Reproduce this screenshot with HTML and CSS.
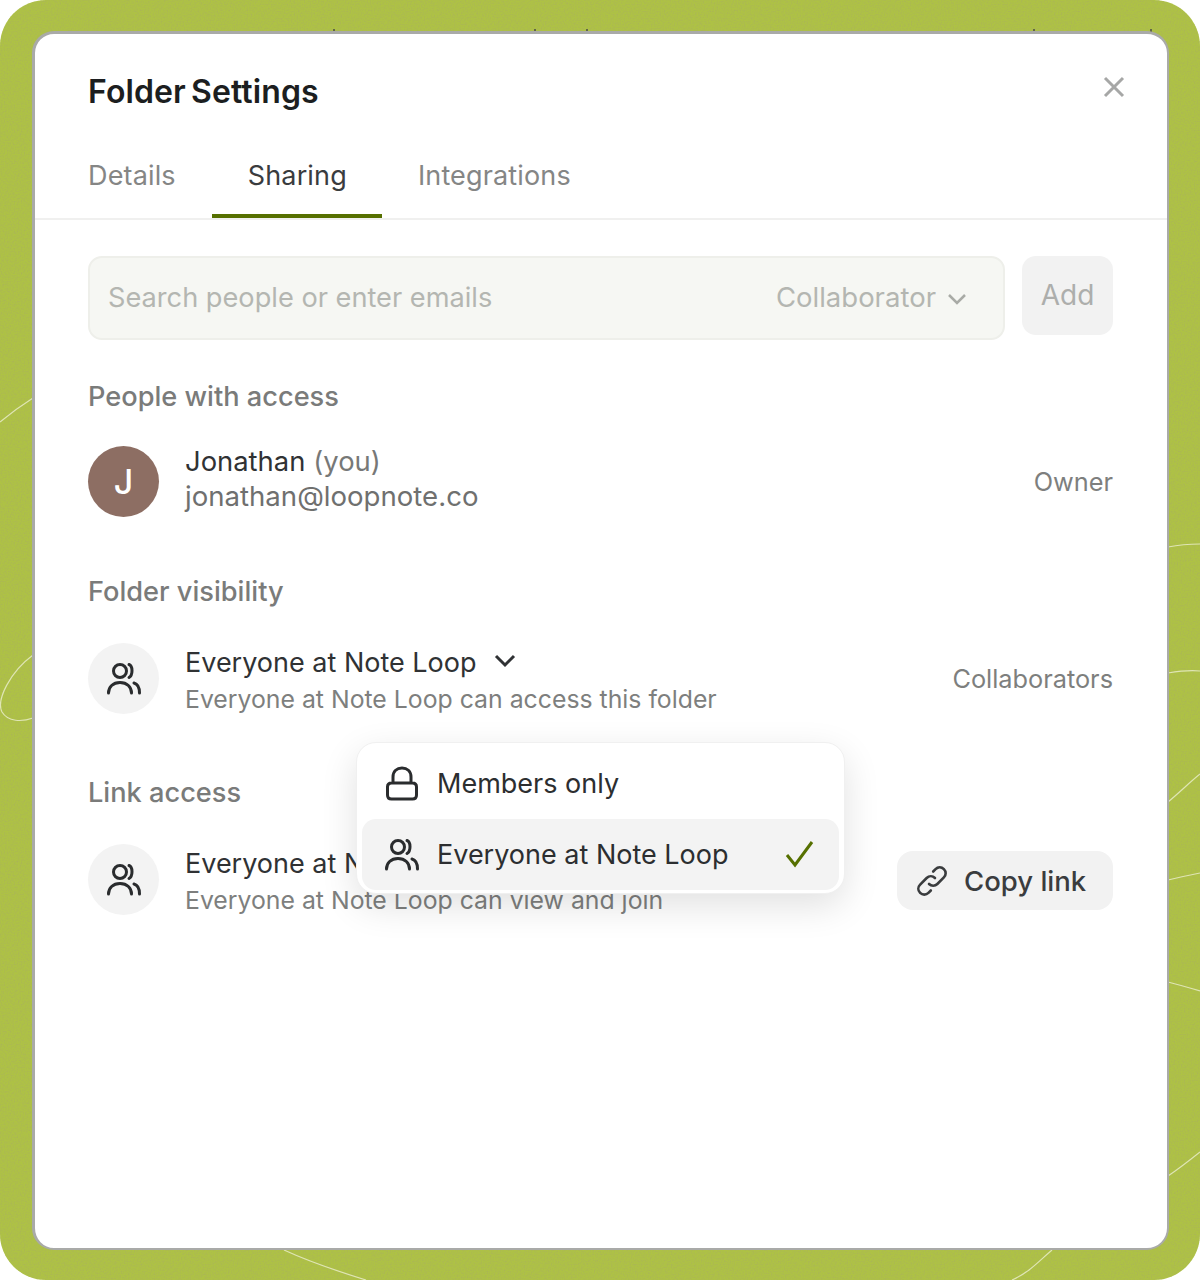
FILE: index.html
```html
<!DOCTYPE html>
<html lang="en">
<head>
  <meta charset="UTF-8" />
  <title>Folder Settings</title>
  <link rel="stylesheet" href="styles.css">
</head>
<body>

  <div class="frame">
    <svg class="grain" width="1200" height="1280" aria-hidden="true">
      <filter id="noise">
        <feTurbulence type="fractalNoise" baseFrequency="0.7" numOctaves="2" />
        <feColorMatrix values="0 0 0 0 0.4  0 0 0 0 0.45  0 0 0 0 0.1  0 0 0 1.6 -0.6" />
      </filter>
      <rect width="1200" height="1280" filter="url(#noise)" />
      <g class="swirl">
        <path d="M0 422 C12 412 22 405 33 398" />
        <path d="M33 655 C10 672 -4 700 2 712 C8 722 22 722 33 718" />
        <path d="M1168 547 C1178 545 1190 544 1200 544" />
        <path d="M1168 673 C1180 671 1190 670 1200 671" />
        <path d="M1168 802 C1180 792 1190 782 1200 774" />
        <path d="M1168 880 C1180 877 1190 875 1200 873" />
        <path d="M1168 982 C1180 985 1190 988 1200 991" />
        <path d="M1168 1176 C1180 1168 1190 1160 1200 1152" />
        <path d="M284 1250 C310 1262 340 1272 366 1280" />
        <path d="M1012 1280 C1030 1272 1040 1260 1052 1250" />
      </g>
      <path class="ticks" d="M334 29 V32 M535 29 V32 M587 29 V32 M1034 29 V32 M1151 29 V32" />
    </svg>

    <div class="modal">
      <header class="modal-head">
        <h1>Folder Settings</h1>
        <svg class="close" width="24" height="24" viewBox="0 0 24 24"><path d="M3 3 L21 21 M21 3 L3 21" /></svg>
      </header>

      <nav class="tabs">
        <a class="tab">Details</a>
        <a class="tab active">Sharing</a>
        <a class="tab">Integrations</a>
      </nav>

      <div class="content">
        <div class="invite">
          <div class="search">
            <span class="placeholder">Search people or enter emails</span>
            <span class="role-select">
              Collaborator
              <svg width="20" height="12" viewBox="0 0 20 12"><path d="M2 2 L10 10 L18 2" /></svg>
            </span>
          </div>
          <button class="add-button">Add</button>
        </div>

        <h2>People with access</h2>
        <div class="row owner-row">
          <div class="avatar">J</div>
          <div class="row-text">
            <div class="row-title">Jonathan <span class="you">(you)</span></div>
            <div class="row-email">jonathan@loopnote.co</div>
          </div>
          <span class="row-role">Owner</span>
        </div>

        <h2 class="visibility-title">Folder visibility</h2>
        <div class="row">
          <div class="circle">
            <svg class="people" width="36" height="36" viewBox="0 0 36 36"><use href="#people-icon" /></svg>
          </div>
          <div class="row-text">
            <div class="row-title">
              Everyone at Note Loop
              <svg class="title-chevron" width="22" height="14" viewBox="0 0 22 14"><path d="M2 2 L11 11 L20 2" /></svg>
            </div>
            <div class="row-sub">Everyone at Note Loop can access this folder</div>
          </div>
          <span class="row-role">Collaborators</span>
        </div>

        <h2 class="link-title">Link access</h2>
        <div class="row">
          <div class="circle">
            <svg class="people" width="36" height="36" viewBox="0 0 36 36"><use href="#people-icon" /></svg>
          </div>
          <div class="row-text">
            <div class="row-title">Everyone at Note Loop</div>
            <div class="row-sub">Everyone at Note Loop can view and join</div>
          </div>
          <button class="copy-button">
            <svg width="38" height="38" viewBox="0 0 32 32"><path d="M13.5 18.5 C15.5 20.5 18.5 20.5 20.5 18.5 L26 13 C28 11 28 8 26 6 C24 4 21 4 19 6 L17 8 M18.5 13.5 C16.5 11.5 13.5 11.5 11.5 13.5 L6 19 C4 21 4 24 6 26 C8 28 11 28 13 26 L15 24" /></svg>
            Copy link
          </button>
        </div>
      </div>

      <div class="menu">
        <div class="menu-item">
          <svg width="36" height="36" viewBox="0 0 36 36"><path d="M3.500 21 C3.500 18.500 5 17 7.500 17 H28.500 C31 17 32.500 18.500 32.500 21 V29 C32.500 31.500 31 33 28.500 33 H7.500 C5 33 3.500 31.500 3.500 29 Z M9 17 V11 C9 5 13 2 18 2 C23 2 27 5 27 11 V17" /></svg>
          Members only
        </div>
        <div class="menu-item selected">
          <svg class="people" width="36" height="36" viewBox="0 0 36 36"><use href="#people-icon" /></svg>
          Everyone at Note Loop
          <svg class="check" width="30" height="30" viewBox="0 0 30 30"><path d="M2 16 L10 26 L27 3" /></svg>
        </div>
      </div>
    </div>
  </div>

  <svg width="0" height="0" class="defs">
    <symbol id="people-icon" viewBox="0 0 36 36">
      <circle cx="14" cy="10" r="6.5" />
      <path d="M23 3.5 C27 5 27 14 23 16.500 M2.500 32 C2.500 26 7 21.500 14 21.500 C21 21.500 25.500 26 25.500 32 M28 22 C31.500 23 33.500 27 33.500 32" />
    </symbol>
  </svg>

</body>
</html>
```

FILE: styles.css
```css
body {
  margin: 0;
  background: white;
  font-family: Inter, "Noto Sans", sans-serif;
  color: #26282a;
}

.frame {
  position: relative;
  width: 1200px;
  height: 1280px;
  box-sizing: border-box;
  padding: 31px 31px 30px 32px;
  background: #aec244;
  border-radius: 46px;
  overflow: hidden;
}

.grain {
  position: absolute;
  top: 0;
  left: 0;
}

.swirl path {
  fill: none;
  stroke: #dfe5b4;
  stroke-width: 1.2;
}

.ticks {
  fill: none;
  stroke: #4a4a48;
  stroke-width: 1.5;
}

.defs {
  position: absolute;
}

.modal {
  position: relative;
  height: 100%;
  box-sizing: border-box;
  background: white;
  border: 3px solid #a9aaa8;
  border-width: 3px 2px 2px 3px;
  border-radius: 22px;
}

.modal-head {
  display: flex;
  justify-content: space-between;
  align-items: flex-start;
  padding: 40px 41px 0 53px;
}

h1 {
  margin: 0;
  font-size: 32px;
  line-height: 36px;
  font-weight: 600;
  letter-spacing: 0.1px;
  word-spacing: -3px;
  color: #1c1e20;
}

.close {
  margin-top: 1px;
}

.close path {
  fill: none;
  stroke: #a6a7a6;
  stroke-width: 3;
}

.tabs {
  display: flex;
  height: 97px;
  box-sizing: border-box;
  margin-top: 13px;
  padding: 0 0 0 17px;
  border-bottom: 2px solid #f0f0ef;
}

.tab {
  padding: 35px 36px 0;
  height: 95px;
  box-sizing: border-box;
  display: flex;
  align-items: flex-start;
  font-size: 27px;
  letter-spacing: 0.15px;
  line-height: 36px;
  color: #858685;
}

.tab.active {
  padding-right: 35px;
  color: #3a3c3e;
  border-bottom: 4px solid #567000;
}

.content {
  padding: 36px 54px 0 53px;
}

.invite {
  display: flex;
  align-items: flex-start;
  gap: 17px;
}

.search {
  flex: 1;
  display: flex;
  justify-content: space-between;
  align-items: center;
  height: 84px;
  box-sizing: border-box;
  padding: 0 36px 2px 18px;
  background: #f6f7f3;
  border: 2px solid #eeefea;
  border-radius: 14px;
  font-size: 27.2px;
  color: #b4b6b1;
}

.role-select {
  display: flex;
  align-items: center;
  gap: 11px;
  font-size: 27.5px;
}

.role-select svg {
  margin-top: 3px;
}

.role-select svg path {
  fill: none;
  stroke: #a9aba6;
  stroke-width: 2.5;
}

.add-button {
  width: 91px;
  height: 79px;
  padding: 0 0 2px;
  border: none;
  background: #f2f2f2;
  border-radius: 14px;
  font: 28px Inter, sans-serif;
  color: #adaeac;
}

h2 {
  margin: 39px 0 31px;
  font-size: 27.2px;
  line-height: 36px;
  font-weight: 500;
  color: #7a7b7a;
}

.visibility-title {
  margin: 57px 0 33px;
}

.link-title {
  margin: 61px 0 33px;
}

.row {
  display: flex;
  align-items: center;
  gap: 26px;
  height: 71px;
}

.avatar, .circle {
  flex: none;
  width: 71px;
  height: 71px;
  border-radius: 50%;
  display: flex;
  align-items: center;
  justify-content: center;
}

.avatar {
  background: #8d6e63;
  color: white;
  font-size: 34px;
  font-weight: 500;
}

.circle {
  background: #f3f3f3;
}

.people {
  fill: none;
  stroke: #2a2c2e;
  stroke-width: 3;
  stroke-linecap: round;
}

.row-text {
  flex: 1;
  min-width: 0;
  padding-top: 4px;
}

.owner-row .row-text {
  padding: 0 0 5px;
}

.row-title {
  display: flex;
  align-items: center;
  gap: 8px;
  font-size: 27px;
  line-height: 36px;
  color: #303234;
}

.owner-row .row-title {
  font-size: 27.4px;
  line-height: 35px;
}

.title-chevron {
  margin-left: 9px;
  margin-top: -4px;
}

.title-chevron path {
  fill: none;
  stroke: #303234;
  stroke-width: 3;
}

.you {
  color: #777877;
}

.row-email {
  font-size: 27.6px;
  line-height: 35px;
  color: #6f706f;
}

.row-sub {
  font-size: 24.8px;
  line-height: 36px;
  color: #7e7f7e;
}

.row-role {
  font-size: 25.300px;
  color: #7e7f7e;
}

.copy-button {
  display: flex;
  align-items: center;
  gap: 13px;
  width: 216px;
  height: 59px;
  margin-top: 2px;
  padding: 0 0 0 16px;
  box-sizing: border-box;
  border: none;
  background: #f2f2f2;
  border-radius: 16px;
  font: 500 27.5px Inter, sans-serif;
  color: #3a3c3e;
}

.copy-button svg path {
  fill: none;
  stroke: #3a3c3e;
  stroke-width: 2.2;
  stroke-linecap: round;
}

.menu {
  position: absolute;
  left: 321px;
  top: 708px;
  width: 489px;
  height: 152px;
  box-sizing: border-box;
  padding: 5px;
  background: white;
  border: 1px solid #f0f0f0;
  border-radius: 20px;
  box-shadow: 0 12px 36px rgba(0, 0, 0, 0.12);
}

.menu-item {
  position: relative;
  display: flex;
  align-items: center;
  gap: 17px;
  height: 71px;
  padding-left: 22px;
  font-size: 27px;
  color: #2c2e30;
  border-radius: 14px;
}

.menu-item > svg:first-child path {
  fill: none;
  stroke: #2a2c2e;
  stroke-width: 3;
}

.menu-item.selected {
  background: #f3f3f3;
}

.check {
  position: absolute;
  right: 24px;
  top: 20px;
}

.check path {
  fill: none;
  stroke: #567000;
  stroke-width: 3;
}
```
